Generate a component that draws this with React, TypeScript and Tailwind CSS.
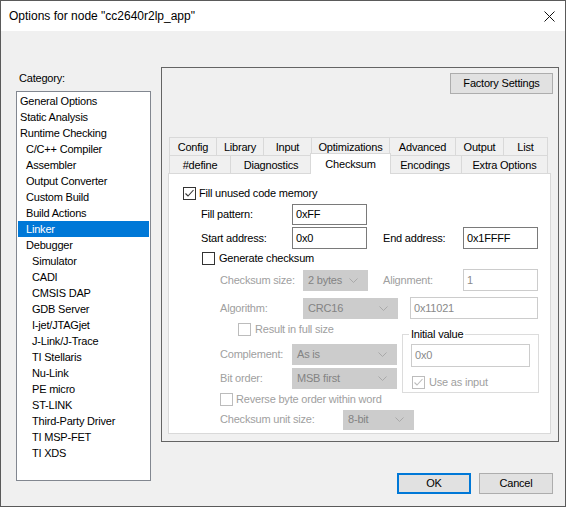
import React from "react";

type Item = { label: string; level: 0 | 1 | 2; selected?: boolean };

const categories: Item[] = [
  { label: "General Options", level: 0 },
  { label: "Static Analysis", level: 0 },
  { label: "Runtime Checking", level: 0 },
  { label: "C/C++ Compiler", level: 1 },
  { label: "Assembler", level: 1 },
  { label: "Output Converter", level: 1 },
  { label: "Custom Build", level: 1 },
  { label: "Build Actions", level: 1 },
  { label: "Linker", level: 1, selected: true },
  { label: "Debugger", level: 1 },
  { label: "Simulator", level: 2 },
  { label: "CADI", level: 2 },
  { label: "CMSIS DAP", level: 2 },
  { label: "GDB Server", level: 2 },
  { label: "I-jet/JTAGjet", level: 2 },
  { label: "J-Link/J-Trace", level: 2 },
  { label: "TI Stellaris", level: 2 },
  { label: "Nu-Link", level: 2 },
  { label: "PE micro", level: 2 },
  { label: "ST-LINK", level: 2 },
  { label: "Third-Party Driver", level: 2 },
  { label: "TI MSP-FET", level: 2 },
  { label: "TI XDS", level: 2 },
];

const indent = ["pl-[2px]", "pl-[8px]", "pl-[14px]"];

const backTabs = [
  { label: "Config", w: "w-[48px]" },
  { label: "Library", w: "w-[47px]" },
  { label: "Input", w: "w-[48px]" },
  { label: "Optimizations", w: "w-[78px]" },
  { label: "Advanced", w: "w-[66px]" },
  { label: "Output", w: "w-[48px]" },
  { label: "List", w: "w-[44px]" },
];

const frontTabs = [
  { label: "#define", w: "w-[62px]" },
  { label: "Diagnostics", w: "w-[81px]" },
  { label: "Checksum", w: "w-[81px]", selected: true },
  { label: "Encodings", w: "w-[73px]" },
  { label: "Extra Options", w: "w-[86px]" },
];

function Check({ checked = false, disabled = false }: { checked?: boolean; disabled?: boolean }) {
  const c = disabled ? "#bcbcbc" : "#333333";
  return (
    <span
      className={`flex h-[13px] w-[13px] shrink-0 items-center justify-center border bg-white ${
        disabled ? "border-[#bcbcbc]" : "border-[#333333]"
      }`}
    >
      {checked && (
        <svg width="11" height="11" viewBox="0 0 11 11">
          <path d="M1.5 5.5 L4 8 L9.5 2" fill="none" stroke={c} strokeWidth="1.1" />
        </svg>
      )}
    </span>
  );
}

function Field({ value, w, disabled = false, h = "h-[22px]" }: { value: string; w: string; disabled?: boolean; h?: string }) {
  return (
    <div
      className={`flex ${h} ${w} shrink-0 items-center border bg-white pl-[3px] ${
        disabled ? "border-[#cccccc] text-[#8a8a8a]" : "border-[#7a7a7a] text-black"
      }`}
    >
      {value}
    </div>
  );
}

function Select({ value, w, h = "h-[21px]" }: { value: string; w: string; h?: string }) {
  return (
    <div
      className={`flex ${h} ${w} shrink-0 items-center justify-between border border-[#cccccc] bg-[#cccccc] pl-[4px] pr-[9px] text-[#838383]`}
    >
      <span>{value}</span>
      <svg width="9" height="5" viewBox="0 0 9 5">
        <path d="M0.5 0.5 L4.5 4.5 L8.5 0.5" fill="none" stroke="#a9a9a9" />
      </svg>
    </div>
  );
}

function Button({ label, w, focused = false }: { label: string; w: string; focused?: boolean }) {
  return (
    <div
      className={`flex h-[21px] ${w} items-center justify-center bg-[#e1e1e1] text-black ${
        focused ? "border-2 border-[#0078d7]" : "border border-[#adadad]"
      }`}
    >
      {label}
    </div>
  );
}

function ChecksumPanel() {
  const dim = "text-[#a0a0a0]";
  return (
    <div className="relative flex h-[261px] w-[383px] flex-col border border-[#d9d9d9] bg-white pt-[13px]">
      <div className="ml-[14px] flex h-[13px] items-center gap-[3px]">
        <Check checked />
        <span>Fill unused code memory</span>
      </div>

      <div className="mt-[4px] flex h-[21px] items-center pl-[32px]">
        <span className="w-[91px] shrink-0">Fill pattern:</span>
        <Field value="0xFF" w="w-[75px]" h="h-[21px]" />
      </div>

      <div className="mt-[2px] flex h-[22px] items-center pl-[32px]">
        <span className="w-[91px] shrink-0">Start address:</span>
        <Field value="0x0" w="w-[75px]" />
        <span className="ml-[16px] w-[80px] shrink-0">End address:</span>
        <Field value="0x1FFFF" w="w-[75px]" />
      </div>

      <div className="mt-[3px] flex h-[13px] items-center gap-[4px] pl-[33px]">
        <Check />
        <span>Generate checksum</span>
      </div>

      <div className="mt-[4px] flex h-[22px] items-center pl-[51px]">
        <span className={`w-[83px] shrink-0 ${dim}`}>Checksum size:</span>
        <Select value="2 bytes" w="w-[65px]" />
        <span className={`ml-[15px] w-[80px] shrink-0 ${dim}`}>Alignment:</span>
        <Field value="1" w="w-[75px]" disabled />
      </div>

      <div className="mt-[6px] flex h-[22px] items-center pl-[51px]">
        <span className={`w-[83px] shrink-0 ${dim}`}>Algorithm:</span>
        <Select value="CRC16" w="w-[95px]" />
        <div className="ml-[12px]">
          <Field value="0x11021" w="w-[128px]" disabled />
        </div>
      </div>

      <div className="flex">
        <div className="flex w-[233px] shrink-0 flex-col">
          <div className={`mt-[4px] flex h-[13px] items-center gap-[4px] pl-[69px] ${dim}`}>
            <Check disabled />
            <span>Result in full size</span>
          </div>
          <div className="mt-[8px] flex h-[21px] items-center pl-[51px]">
            <span className={`w-[72px] shrink-0 ${dim}`}>Complement:</span>
            <Select value="As is" w="w-[105px]" />
          </div>
          <div className="mt-[3px] flex h-[21px] items-center pl-[51px]">
            <span className={`w-[72px] shrink-0 ${dim}`}>Bit order:</span>
            <Select value="MSB first" w="w-[105px]" />
          </div>
          <div className={`mt-[4px] flex h-[13px] items-center gap-[3px] pl-[51px] ${dim}`}>
            <Check disabled />
            <span className="whitespace-nowrap">Reverse byte order within word</span>
          </div>
          <div className="mt-[3px] flex h-[21px] items-center pl-[51px]">
            <span className={`w-[123px] shrink-0 ${dim}`}>Checksum unit size:</span>
            <Select value="8-bit" w="w-[71px]" h="h-[20px]" />
          </div>
        </div>

        <div className="relative mt-[15px] flex h-[59px] w-[137px] flex-col border border-[#dcdcdc]">
          <span className="absolute -top-[8px] left-[6px] bg-white px-[2px] leading-[14px] text-black">Initial value</span>
          <div className="ml-[8px] mt-[9px]">
            <Field value="0x0" w="w-[119px]" h="h-[23px]" disabled />
          </div>
          <div className={`ml-[9px] mt-[9px] flex h-[12px] items-center gap-[4px] ${dim}`}>
            <Check checked disabled />
            <span>Use as input</span>
          </div>
        </div>
      </div>
    </div>
  );
}

function Tabs() {
  return (
    <div className="flex flex-col">
      <div className="ml-[7px] flex h-[18px]">
        {backTabs.map((t, i) => (
          <div
            key={t.label}
            className={`flex h-[18px] ${t.w} items-center justify-center border-t border-r border-[#d9d9d9] pt-[1px] ${
              i === 0 ? "border-l" : ""
            }`}
          >
            {t.label}
          </div>
        ))}
      </div>
      <div className="ml-[7px] flex h-[18px] items-end">
        {frontTabs.map((t, i) =>
          t.selected ? (
            <div
              key={t.label}
              className={`relative z-10 -mx-[2px] -mb-[1px] flex h-[21px] ${t.w} items-start justify-center border-x border-t border-[#d9d9d9] bg-white pt-[2px]`}
            >
              {t.label}
            </div>
          ) : (
            <div
              key={t.label}
              className={`flex h-[18px] ${t.w} items-center justify-center border-t border-r border-[#d9d9d9] pt-[1px] ${
                i === 0 ? "border-l" : ""
              }`}
            >
              {t.label}
            </div>
          )
        )}
      </div>
      <div className="ml-[6px]">
        <ChecksumPanel />
      </div>
    </div>
  );
}

export default function App() {
  return (
    <div className="flex h-[507px] w-[566px] flex-col border border-[#5a5a5a] font-['Liberation_Sans',Arial,sans-serif] text-[11px] tracking-[-0.2px] text-black">
      {/* title bar */}
      <div className="flex h-[30px] shrink-0 items-center justify-between bg-white pl-[8px] pr-[10px]">
        <span className="text-[12px] tracking-normal">Options for node "cc2640r2lp_app"</span>
        <svg width="11" height="11" viewBox="0 0 11 11">
          <path d="M0.5 0.5 L10.5 10.5 M10.5 0.5 L0.5 10.5" stroke="#111" strokeWidth="1" />
        </svg>
      </div>

      <div className="flex flex-1 bg-[#f0f0f0] pl-[15px] pt-[36px]">
        {/* category list */}
        <div className="flex w-[135px] flex-col pt-[4px]">
          <span className="ml-[3px] h-[14px] leading-[14px]">Category:</span>
          <div className="mt-[6px] flex h-[390px] flex-col border border-[#828790] bg-white p-[1px]">
            {categories.map((c) => (
              <div
                key={c.label}
                className={`flex h-[16px] shrink-0 items-center ${indent[c.level]} ${
                  c.selected ? "bg-[#0078d7] text-white" : "text-black"
                }`}
              >
                {c.label}
              </div>
            ))}
          </div>
        </div>

        {/* options frame + buttons */}
        <div className="ml-[10px] flex flex-col">
          <div className="flex h-[375px] w-[398px] flex-col border border-[#646464] pt-[5px]">
            <div className="flex justify-end pr-[5px]">
              <Button label="Factory Settings" w="w-[103px]" />
            </div>
            <div className="mt-[43px]">
              <Tabs />
            </div>
          </div>
          <div className="mt-[31px] flex justify-end gap-[8px] pr-[6px]">
            <Button label="OK" w="w-[74px]" focused />
            <Button label="Cancel" w="w-[74px]" />
          </div>
        </div>
      </div>
    </div>
  );
}
